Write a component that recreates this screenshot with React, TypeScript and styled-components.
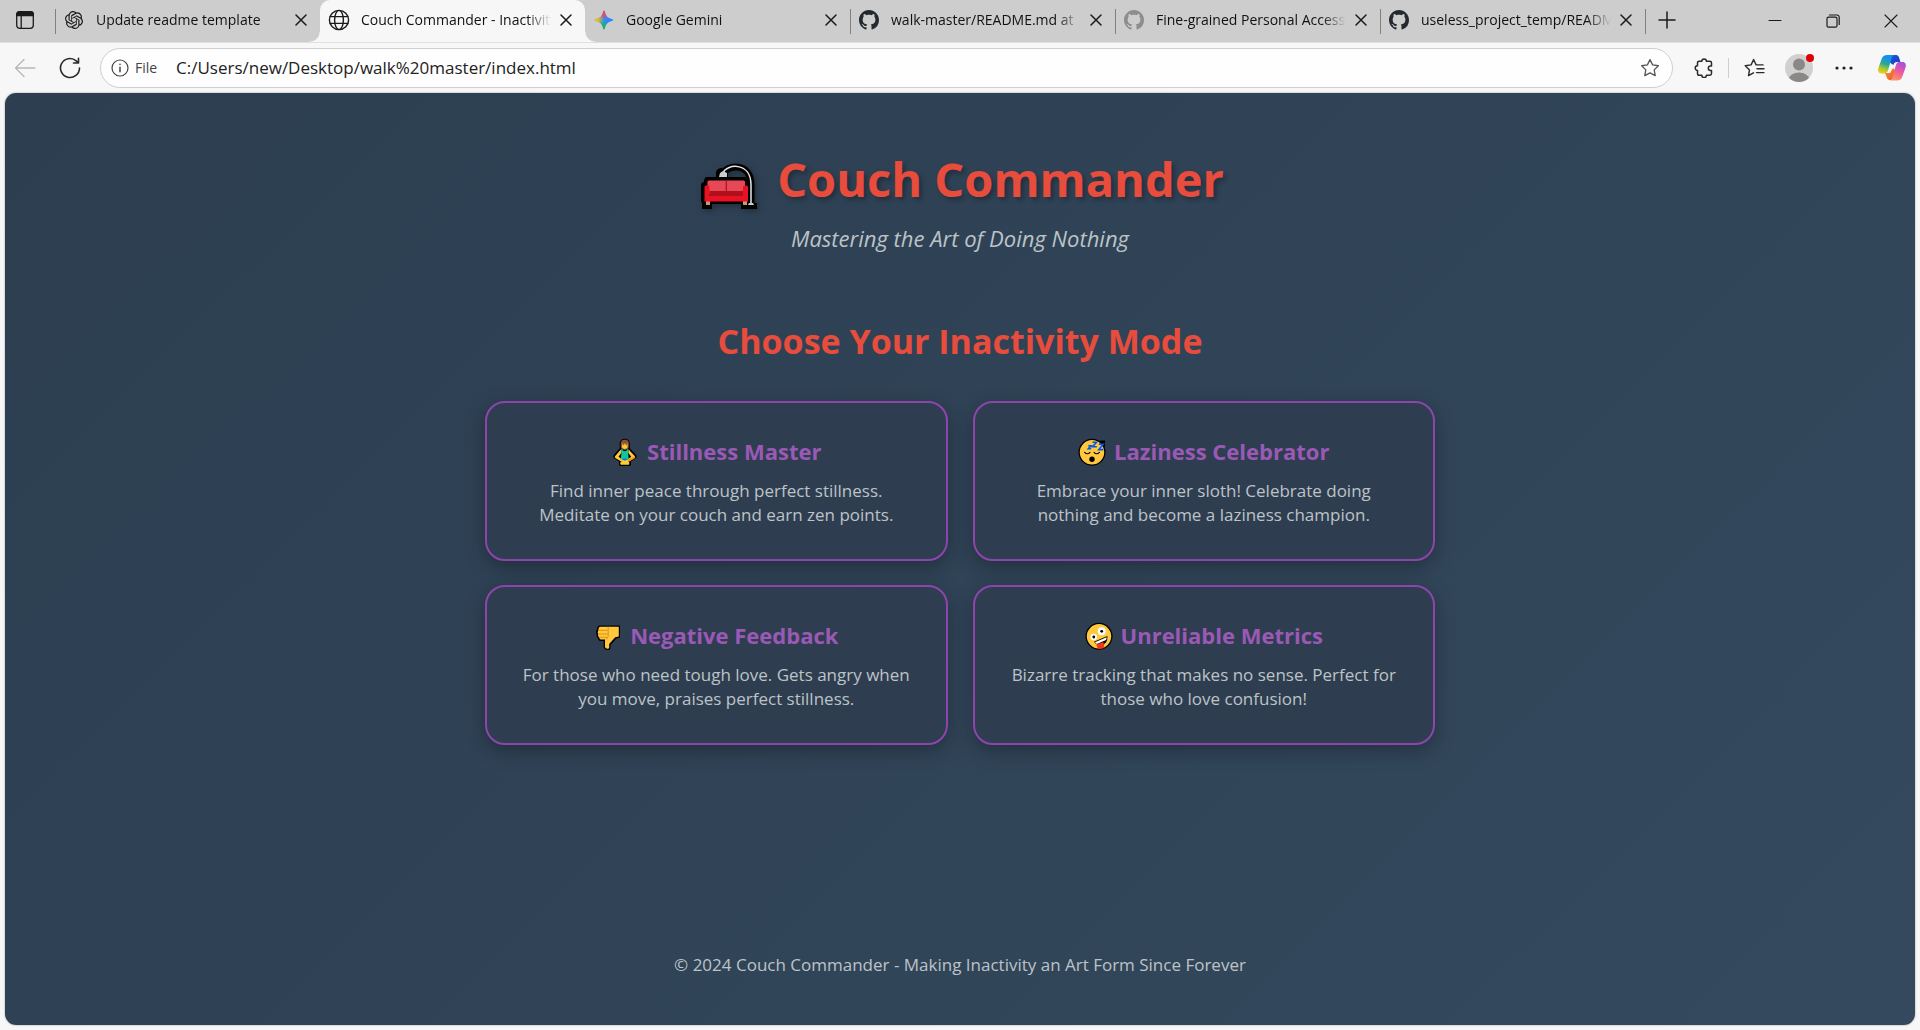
import React from "react";
import styled, { createGlobalStyle, css } from "styled-components";
import { SiOpenai } from "react-icons/si";

const GlobalStyle = createGlobalStyle`
  *, *::before, *::after { box-sizing: border-box; }
  body {
    margin: 0;
    background: #f7f7f7;
    font-family: "Open Sans", "Noto Sans", sans-serif;
  }
  h1, h2, h3, p { margin: 0; }
  button { font: inherit; color: inherit; }
`;

/* ---------- browser frame ---------- */

const Window = styled.div`
  min-height: 100vh;
  display: flex;
  flex-direction: column;
`;

const TabStrip = styled.div`
  display: flex;
  align-items: stretch;
  height: 42px;
  background: #cdcdcd;
  color: #1b1b1b;
`;

const IconButton = styled.button<{ $width?: number; $height?: number }>`
  flex: none;
  display: flex;
  align-items: center;
  justify-content: center;
  width: ${(p) => p.$width ?? 32}px;
  height: ${(p) => p.$height ?? 40}px;
  padding: 0;
  border: 0;
  background: none;
`;

const TabList = styled.div`
  display: flex;
  flex: 0 1 1590px;
  min-width: 0;
  margin-left: 5px;
`;

const divider = css`
  &::before {
    content: "";
    position: absolute;
    left: 0;
    top: 9px;
    width: 1px;
    height: 25px;
    background: #808080;
  }
`;

const Tab = styled.div<{ $active?: boolean; $divider?: boolean }>`
  position: relative;
  flex: 1 1 0;
  min-width: 0;
  display: flex;
  align-items: center;
  padding: 0 7px 2px 8px;

  ${(p) => p.$divider && divider}

  ${(p) =>
    p.$active &&
    css`
      background: #f7f7f7;
      border-radius: 10px 10px 0 0;
      &::before,
      &::after {
        content: "";
        position: absolute;
        bottom: 0;
        width: 10px;
        height: 10px;
      }
      &::before {
        left: -10px;
        background: radial-gradient(circle at 0 0, transparent 9px, #f7f7f7 10px);
      }
      &::after {
        right: -10px;
        background: radial-gradient(circle at 100% 0, transparent 9px, #f7f7f7 10px);
      }
    `}
`;

const NewTabButton = styled(IconButton)`
  position: relative;
  ${divider}
`;

const TabButton = styled.button`
  flex: 1;
  min-width: 0;
  display: flex;
  align-items: center;
  gap: 11px;
  height: 40px;
  padding: 0 3px 0 0;
  border: 0;
  background: none;
  text-align: left;
`;

const Favicon = styled.span`
  flex: none;
  display: flex;
  align-items: center;
  justify-content: center;
  width: 22px;
  height: 22px;
`;

const TabTitle = styled.span`
  flex: 1;
  min-width: 0;
  overflow: hidden;
  white-space: nowrap;
  font-size: 14px;
  line-height: 20px;
  color: #111;
  mask-image: linear-gradient(to right, #000 calc(100% - 24px), transparent);
`;

const WindowButtons = styled.div`
  display: flex;
  margin-left: auto;
`;

const Toolbar = styled.div`
  display: flex;
  align-items: center;
  padding: 5px 0 5px 6px;
  border-top: 1px solid #e0e0e0;
  color: #2b2b2b;
`;

const AddressBar = styled.form`
  flex: 1;
  min-width: 0;
  display: flex;
  align-items: center;
  height: 40px;
  margin: 0 14px 0 4px;
  padding: 0 7px 0 10px;
  background: #fefefe;
  border: 1px solid #cfcfcf;
  border-radius: 20px;
`;

const SiteInfo = styled.button`
  flex: none;
  display: flex;
  align-items: center;
  gap: 6px;
  width: 65px;
  padding: 0;
  border: 0;
  background: none;
  font-size: 14px;
  line-height: 20px;
  color: #444;
`;

const UrlInput = styled.input`
  flex: 1;
  min-width: 0;
  padding: 0;
  border: 0;
  outline: 0;
  background: none;
  font: 17px/24px "Open Sans", "Noto Sans", sans-serif;
  color: #222;
`;

const ToolbarDivider = styled.span`
  width: 1px;
  height: 20px;
  margin: 0 5px 0 7px;
  background: #cfcfcf;
`;

const Avatar = styled.span`
  position: relative;
  width: 28px;
  height: 28px;
`;

const Badge = styled.span`
  position: absolute;
  top: 0;
  right: -1px;
  width: 8px;
  height: 8px;
  border-radius: 50%;
  background: #e00000;
`;

/* ---------- page ---------- */

const Viewport = styled.div`
  flex: 1;
  display: flex;
  flex-direction: column;
  align-items: center;
  margin: 0 5px 5px;
  padding: 52px 24px 48px;
  border-radius: 11px;
  background: linear-gradient(135deg, #2c3e50, #34495e);
  box-shadow: 0 0 2px rgba(0, 0, 0, 0.4);
  color: #bdc3c7;
  text-align: center;
`;

const Header = styled.header`
  display: flex;
  flex-direction: column;
  gap: 10px;
  margin-bottom: 65px;
`;

const SiteTitle = styled.h1`
  display: flex;
  align-items: center;
  justify-content: center;
  gap: 17px;
  font-size: 47px;
  line-height: 68px;
  font-weight: 700;
  color: #e74c3c;
  text-shadow: 3px 3px 5px rgba(0, 0, 0, 0.3);
  svg { filter: drop-shadow(2px 2px 3px rgba(0, 0, 0, 0.3)); }
`;

const Tagline = styled.p`
  font-size: 22px;
  line-height: 30px;
  font-style: italic;
`;

const Main = styled.main`
  flex: 1;
  width: 100%;
  max-width: 950px;
`;

const SectionTitle = styled.h2`
  margin-bottom: 37px;
  font-size: 34px;
  line-height: 46px;
  font-weight: 700;
  color: #e74c3c;
`;

const ModeGrid = styled.div`
  display: grid;
  grid-template-columns: repeat(auto-fit, minmax(350px, 1fr));
  gap: 24px 25px;
`;

const ModeCard = styled.a`
  display: flex;
  flex-direction: column;
  gap: 12px;
  padding: 32px;
  border: 2px solid #8e44ad;
  border-radius: 20px;
  background: #2e3e50;
  box-shadow: 0 6px 20px rgba(0, 0, 0, 0.3);
  color: inherit;
  text-decoration: none;
`;

const ModeName = styled.h3`
  display: flex;
  align-items: center;
  justify-content: center;
  gap: 8px;
  font-size: 22px;
  line-height: 32px;
  font-weight: 700;
  color: #9b59b6;
`;

const ModeText = styled.p`
  font-size: 17px;
  line-height: 24px;
`;

const Footer = styled.footer`
  font-size: 17px;
  line-height: 24px;
`;

/* ---------- browser icons ---------- */

type Stroke = React.SVGProps<SVGSVGElement>;

const Line = ({ width = 20, height = 20, children, ...rest }: Stroke) => (
  <svg
    width={width}
    height={height}
    viewBox={`0 0 ${width} ${height}`}
    fill="none"
    stroke="currentColor"
    strokeWidth={1.3}
    strokeLinecap="round"
    strokeLinejoin="round"
    aria-hidden="true"
    {...rest}
  >
    {children}
  </svg>
);

const TabMenuIcon = () => (
  <Line>
    <rect x="1.7" y="1.7" width="16.6" height="16.6" rx="3" />
    <path d="M1.7 5.5V4.5a2.8 2.8 0 0 1 2.8-2.8h11a2.8 2.8 0 0 1 2.8 2.8v1z" fill="currentColor" />
    <path d="M6.2 6v12" />
  </Line>
);

const CloseIcon = () => (
  <Line width={12} height={12} strokeWidth={1.5}>
    <path d="M1 1l10 10M11 1L1 11" />
  </Line>
);

const GlobeIcon = () => (
  <Line width={22} height={22} strokeWidth={1.4}>
    <circle cx="11" cy="11" r="9.6" />
    <ellipse cx="11" cy="11" rx="4.4" ry="9.6" />
    <path d="M2.2 7.6h17.6M2.2 14.4h17.6" />
  </Line>
);

const GeminiIcon = () => (
  <svg width="20" height="20" viewBox="0 0 20 20" aria-hidden="true">
    <defs>
      <linearGradient id="gem-base" x1="0" y1="0" x2="1" y2="0">
        <stop offset="0.2" stopColor="#4a9be0" />
        <stop offset="0.6" stopColor="#3186ff" />
      </linearGradient>
      <radialGradient id="gem-red" cx="0.45" cy="0" r="0.5">
        <stop offset="0.3" stopColor="#f9434f" />
        <stop offset="1" stopColor="#f9434f" stopOpacity="0" />
      </radialGradient>
      <radialGradient id="gem-yellow" cx="0" cy="0.5" r="0.5">
        <stop offset="0.3" stopColor="#fbbc04" />
        <stop offset="1" stopColor="#fbbc04" stopOpacity="0" />
      </radialGradient>
      <radialGradient id="gem-green" cx="0.45" cy="1" r="0.5">
        <stop offset="0.3" stopColor="#10b95a" />
        <stop offset="1" stopColor="#10b95a" stopOpacity="0" />
      </radialGradient>
    </defs>
    {["gem-base", "gem-red", "gem-yellow", "gem-green"].map((id) => (
      <path
        key={id}
        fill={`url(#${id})`}
        d="M10 .8c.5 0 .7.5.9 1.3 1 4 3 6 7 7 .8.2 1.3.4 1.3.9s-.5.7-1.3.9c-4 1-6 3-7 7-.2.8-.4 1.3-.9 1.3s-.7-.5-.9-1.3c-1-4-3-6-7-7-.8-.2-1.3-.4-1.3-.9s.5-.7 1.3-.9c4-1 6-3 7-7 .2-.8.4-1.3.9-1.3z"
      />
    ))}
  </svg>
);

const GithubIcon = ({ color = "#24292f" }: { color?: string }) => (
  <svg width="20" height="20" viewBox="0 0 16 16" fill={color} aria-hidden="true">
    <path d="M8 0C3.58 0 0 3.58 0 8c0 3.54 2.29 6.53 5.47 7.59.4.07.55-.17.55-.38 0-.19-.01-.82-.01-1.49-2.01.37-2.53-.49-2.69-.94-.09-.23-.48-.94-.82-1.13-.28-.15-.68-.52-.01-.53.63-.01 1.08.58 1.23.82.72 1.21 1.87.87 2.33.66.07-.52.28-.87.51-1.07-1.78-.2-3.64-.89-3.64-3.95 0-.87.31-1.59.82-2.15-.08-.2-.36-1.02.08-2.12 0 0 .67-.21 2.2.82.64-.18 1.32-.27 2-.27s1.36.09 2 .27c1.53-1.04 2.2-.82 2.2-.82.44 1.1.16 1.92.08 2.12.51.56.82 1.27.82 2.15 0 3.07-1.87 3.75-3.65 3.95.29.25.54.73.54 1.48 0 1.07-.01 1.93-.01 2.2 0 .21.15.46.55.38A8.01 8.01 0 0 0 16 8c0-4.42-3.58-8-8-8z" />
  </svg>
);

const STAR = "M10 1.6l2.6 5.3 5.8.85-4.2 4.1 1 5.8L10 14.9l-5.2 2.75 1-5.8-4.2-4.1 5.8-.85z";

const CopilotIcon = () => (
  <svg width="30" height="28" viewBox="0 0 30 28" aria-hidden="true">
    <defs>
      <linearGradient id="cp-left" x1="0.6" y1="0" x2="0.3" y2="1">
        <stop offset="0.15" stopColor="#1690ee" />
        <stop offset="0.5" stopColor="#2fa98c" />
        <stop offset="0.75" stopColor="#a5c63a" />
        <stop offset="1" stopColor="#f7c90c" />
      </linearGradient>
      <linearGradient id="cp-right" x1="0.7" y1="0" x2="0.3" y2="1">
        <stop offset="0" stopColor="#a450e0" />
        <stop offset="0.5" stopColor="#ee5a9c" />
        <stop offset="1" stopColor="#ff9a5a" />
      </linearGradient>
      <linearGradient id="cp-fold" x1="0" y1="0" x2="1" y2="1">
        <stop offset="0" stopColor="#1b58d8" />
        <stop offset="1" stopColor="#1a3bc4" />
      </linearGradient>
      <linearGradient id="cp-tail" x1="0" y1="0" x2="1" y2="1">
        <stop offset="0" stopColor="#f6a21c" />
        <stop offset="1" stopColor="#ee4a3e" />
      </linearGradient>
    </defs>
    <path fill="url(#cp-fold)" d="M14 1h5c2 0 2.8 1.4 3.3 3.2L23.4 8H20c-2 0-3 1-3.6 3L12 8z" />
    <path fill="url(#cp-tail)" d="M8 19h5l3-5 3 3-3 9h-3c-2 0-2.800-1.200-3.300-2.800z" />
    <path fill="url(#cp-left)" d="M10 1h7.5c-2 .4-2.6 2-3.2 4l-3 10.500c-.6 2.200-1.600 3.900-4 3.900H4.500C1.500 19.400.6 17 1.400 14L4.800 4.500C5.700 2.200 7.400 1 10 1z" />
    <path fill="url(#cp-right)" d="M20 26.500h-7.500c2-.4 2.600-2 3.200-4l3-10.700c.6-2.200 1.600-3.900 4-3.900h2.800c3 0 3.900 2.500 3.100 5.400l-3.400 9.700c-.9 2.300-2.600 3.500-5.200 3.500z" />
  </svg>
);

/* ---------- page emoji ---------- */

const CouchIcon = () => (
  <svg width="64" height="64" viewBox="0 0 64 64" aria-hidden="true">
    <path d="M27 27C30 18 55 14 55 38V58" fill="none" stroke="#000" strokeWidth="7" />
    <path d="M20 25q1-4 6-4h6v10H20z" fill="#000" />
    <path d="M9 30h41q3 0 3 5 3 1 3 4v17h5v6H45v-5H16v5H6v-6l-1-2V39q0-4 3-4 0-5 3-5z" fill="#000" />
    <path d="M27 26C30 17 55 14 55 38v19" fill="none" stroke="#e8e8e8" strokeWidth="1.5" />
    <path d="M24 26l3-2 4 2v4h-8z" fill="#ccc" />
    <path d="M52 58l1-2h4l1 2z" fill="#ccc" />
    <rect x="10" y="54" width="4" height="4" fill="#c8986a" />
    <rect x="47" y="54" width="4" height="4" fill="#c8986a" />
    <rect x="11.5" y="33.5" width="37.5" height="14" rx="1.5" fill="#e74856" />
    <path d="M30.3 33.5v11" stroke="#b0101c" strokeWidth="1.2" />
    <path d="M8.5 40q0-1.500 1.500-1.500h2q1.500 0 1.500 1.500v9H47v-9q0-1.500 1.500-1.500h2q1.500 0 1.500 1.500v14.500H8.500z" fill="#e81224" />
    <rect x="13.5" y="44" width="33.5" height="5" fill="#b0101c" />
  </svg>
);

const Emoji = ({ children }: { children: React.ReactNode }) => (
  <svg width="28" height="30" viewBox="0 0 28 30" aria-hidden="true">
    {children}
  </svg>
);

const YogaIcon = () => (
  <Emoji>
    <path
      d="M13.7 2.7c-3 0-5 2-5 5v4.500L2.800 19c-.9 1.300-.4 2.700.8 3.500L8 25.500v3q0 1.500 2 1.500h8q2 0 2-1.500v-3l4.400-3c1.200-.8 1.700-2.200.8-3.500l-6.400-6.800V7.700c0-3-2-5-5.100-5z"
      fill="#000"
    />
    <path d="M9.8 13.5L4 20.300q-.6 1.200.6 1.900l6 3.500 6.500.3 6.300-3.800q1.200-.7.5-1.900l-6.300-6.800-.4 3.200 3 4-3.500 2.600h-5.600l-3.500-2.600 2.700-4z" fill="#ffc83d" />
    <path d="M17 23.500l6.500-3.300q1.200.8 0 2L17 26z" fill="#f09a12" />
    <path d="M9.200 26.500l4.500-2.700 4.600 2.700v1.300q0 1-1 1h-7q-1 0-1-1z" fill="#ffc83d" />
    <rect x="9.800" y="3.800" width="8" height="10" rx="3.600" fill="#8a5430" />
    <path d="M11 7.800h5.600v2.500c0 1.800-1.200 2.800-2.800 2.800S11 12.100 11 10.300z" fill="#ffc83d" />
    <path d="M11.600 8.700h1.600M14.600 8.700h1.600" stroke="#5c3018" strokeWidth="0.8" />
    <path d="M10 13.300h1.300q.5 2 2.500 2t2.500-2h1.300l-.4 5 .6 5H9.700l.6-5z" fill="#10c5a0" />
    <path d="M11 23.200q2.800-1.400 5.600 0l-2.800 1.500z" fill="#0078d7" />
  </Emoji>
);

const SleepingIcon = () => (
  <Emoji>
    <circle cx="14" cy="16.3" r="13.5" fill="#000" />
    <path d="M20.500 5.200l1.500-.8h5v5.100l-1 3z" fill="#000" />
    <circle cx="14" cy="16.3" r="12.2" fill="#ffc83d" />
    <path d="M6.600 16.300q2.700 3 5.400 0M16 16.300q2.700 3 5.400 0" fill="none" stroke="#000" strokeWidth="1.1" strokeLinecap="round" />
    <circle cx="14" cy="23.2" r="2.7" fill="#000" />
    <path
      d="M10.300 9.800h2.700l-2.700 3h2.900M14.500 6.300h4l-4 4.500h4.300M20.800 8.300h4.400l-4.400 5.300h4.600"
      fill="none"
      stroke="#0057f0"
      strokeWidth="1.6"
    />
  </Emoji>
);

const ThumbsDownIcon = () => (
  <Emoji>
    <path d="M6 5.400h20v12.200l-3.600.9L16.500 25v2.700q0 2.300-2.800 2.300t-4-2.500v-6.600H7q-2.800 0-3-2.500Q1.900 16.500 2.500 14q-1-2.300.3-4.500Q3.200 5.400 6 5.400z" fill="#000" />
    <path d="M6.200 6.700h18.600v9.700l-3.600.8L15.200 24v3.800q0 1-1.500 1t-2.700-1.600v-7.600H7.200q-1.800 0-1.900-2.200-1.700-1-1.200-3.200-.9-1.900.3-3.900.1-3.600 1.800-3.600z" fill="#ffc83d" />
    <path d="M4.400 10.300h9.200M4.200 14h9.400M5.400 17.300h8.200M14.200 6.700v10l-2 3" fill="none" stroke="#d98c12" strokeWidth="0.9" />
  </Emoji>
);

const ZanyIcon = () => (
  <Emoji>
    <circle cx="14" cy="16.3" r="13.5" fill="#000" />
    <circle cx="14" cy="16.3" r="12.2" fill="#ffc83d" />
    <circle cx="8.8" cy="17" r="3.3" fill="#fff" />
    <circle cx="8.8" cy="17" r="1.4" fill="#000" />
    <circle cx="16.7" cy="11.3" r="4" fill="#fff" />
    <circle cx="16.7" cy="11.3" r="1.4" fill="#000" />
    <path d="M9 21.800L22.400 16q.4 6-3.400 8.200-6.500 2.600-10-2.400z" fill="#000" />
    <path d="M10 22.300l11.600-5q0 1.600-.5 2.800L11.800 24q-1.100-.6-1.800-1.700z" fill="#fff" />
    <path d="M11.200 24.600l7.200-2.500 1 5.600q-2.600 1.600-6.600.9z" fill="#f03a17" />
  </Emoji>
);

/* ---------- content ---------- */

const tabs = [
  { title: "Update readme template", icon: <SiOpenai size={18} />, divider: true },
  { title: "Couch Commander - Inactivity", icon: <GlobeIcon />, active: true },
  { title: "Google Gemini", icon: <GeminiIcon /> },
  { title: "walk-master/README.md at", icon: <GithubIcon />, divider: true },
  { title: "Fine-grained Personal Access", icon: <GithubIcon color="#8b8d8f" />, divider: true },
  { title: "useless_project_temp/README", icon: <GithubIcon />, divider: true },
];

const modes = [
  {
    name: "Stillness Master",
    icon: <YogaIcon />,
    text: "Find inner peace through perfect stillness. Meditate on your couch and earn zen points.",
  },
  {
    name: "Laziness Celebrator",
    icon: <SleepingIcon />,
    text: "Embrace your inner sloth! Celebrate doing nothing and become a laziness champion.",
  },
  {
    name: "Negative Feedback",
    icon: <ThumbsDownIcon />,
    text: "For those who need tough love. Gets angry when you move, praises perfect stillness.",
  },
  {
    name: "Unreliable Metrics",
    icon: <ZanyIcon />,
    text: "Bizarre tracking that makes no sense. Perfect for those who love confusion!",
  },
];

const TabRow = () => (
  <TabStrip>
    <IconButton $width={50} aria-label="Tab actions menu">
      <TabMenuIcon />
    </IconButton>
    <TabList role="tablist">
      {tabs.map((t) => (
        <Tab key={t.title} $active={t.active} $divider={t.divider}>
          <TabButton role="tab" aria-selected={!!t.active}>
            <Favicon>{t.icon}</Favicon>
            <TabTitle>{t.title}</TabTitle>
          </TabButton>
          <IconButton $width={24} aria-label={`Close ${t.title}`}>
            <CloseIcon />
          </IconButton>
        </Tab>
      ))}
    </TabList>
    <NewTabButton $width={44} aria-label="New tab">
      <Line width={18} height={18} strokeWidth={1.5}>
        <path d="M9 1v16M1 9h16" />
      </Line>
    </NewTabButton>
    <WindowButtons>
      <IconButton $width={58} aria-label="Minimize">
        <Line width={14} height={14} strokeWidth={1}>
          <path d="M1 7.5h12" />
        </Line>
      </IconButton>
      <IconButton $width={58} $height={42} aria-label="Restore">
        <Line width={14} height={14} strokeWidth={1.2}>
          <rect x="1" y="3.2" width="10" height="10" rx="1.5" />
          <path d="M3.5 1H11a2.200 2.200 0 0 1 2.200 2.200v7.300" />
        </Line>
      </IconButton>
      <IconButton $width={58} $height={42} aria-label="Close window">
        <Line width={14} height={14} strokeWidth={1.1}>
          <path d="M1 1l12 12M13 1L1 13" />
        </Line>
      </IconButton>
    </WindowButtons>
  </TabStrip>
);

const AddressRow = () => (
  <Toolbar>
    <IconButton $width={38} aria-label="Back">
      <Line width={22} height={20} stroke="#b8b8b8">
        <path d="M21 10H1.500M10 1.500L1.500 10l8.500 8.500" />
      </Line>
    </IconButton>
    <IconButton $width={52} aria-label="Refresh">
      <Line width={22} height={22} strokeWidth={1.6}>
        <path d="M20.500 11a9.500 9.500 0 1 1-3.300-7.200L19.500 6M19.500 1.300V6h-5" />
      </Line>
    </IconButton>
    <AddressBar role="search" onSubmit={(e) => e.preventDefault()}>
      <SiteInfo type="button">
        <Line width={18} height={18} strokeWidth={1.2}>
          <circle cx="9" cy="9" r="8" />
          <path d="M9 8.200v4.600M9 5.300v.2" strokeWidth="1.5" />
        </Line>
        File
      </SiteInfo>
      <UrlInput aria-label="Address" defaultValue="C:/Users/new/Desktop/walk%20master/index.html" />
      <IconButton $width={30} $height={30} type="button" aria-label="Add to favorites">
        <Line stroke="#555">
          <path d={STAR} />
        </Line>
      </IconButton>
    </AddressBar>
    <IconButton aria-label="Extensions" $width={34}>
      <Line width={20} height={20} strokeWidth={1.5}>
        <path d="M7.800 3.200a2.300 2.300 0 0 1 4.600 0h3.400q1.700 0 1.700 1.700V8h-1a2.200 2.200 0 0 0 0 4.400h1v3.200q0 1.700-1.700 1.700h-3.400a2.300 2.300 0 0 1-4.600 0H5.200q-1.700 0-1.700-1.700v-3.200a2.300 2.300 0 0 1 0-4.600V4.900q0-1.700 1.700-1.700z" />
      </Line>
    </IconButton>
    <ToolbarDivider />
    <IconButton aria-label="Favorites" $width={40}>
      <Line width={22} height={20} strokeWidth={1.4}>
        <path d="M10.500 14.800l-5 2.800 1-5.700-4.300-4.100 5.900-.9L10.600 1.500l2.500 5.400h7M14 10.800h7M13.500 14.600H21" />
      </Line>
    </IconButton>
    <IconButton aria-label="Profile" $width={50}>
      <Avatar>
        <svg width="28" height="28" viewBox="0 0 28 28" aria-hidden="true">
          <clipPath id="avatar-clip">
            <circle cx="14" cy="14" r="14" />
          </clipPath>
          <g clipPath="url(#avatar-clip)">
            <rect width="28" height="28" fill="#d2d0ce" />
            <circle cx="14" cy="10.5" r="6" fill="#8a8886" />
            <ellipse cx="14" cy="25" rx="10" ry="6.5" fill="#8a8886" />
          </g>
        </svg>
        <Badge />
      </Avatar>
    </IconButton>
    <IconButton aria-label="Settings and more" $width={40}>
      <svg width="18" height="4" viewBox="0 0 18 4" fill="#222" aria-hidden="true">
        <circle cx="2" cy="2" r="1.6" />
        <circle cx="9" cy="2" r="1.6" />
        <circle cx="16" cy="2" r="1.6" />
      </svg>
    </IconButton>
    <IconButton aria-label="Copilot" $width={56}>
      <CopilotIcon />
    </IconButton>
  </Toolbar>
);

export default function App() {
  return (
    <Window>
      <GlobalStyle />
      <TabRow />
      <AddressRow />
      <Viewport>
        <Header>
          <SiteTitle>
            <CouchIcon />
            Couch Commander
          </SiteTitle>
          <Tagline>Mastering the Art of Doing Nothing</Tagline>
        </Header>
        <Main>
          <SectionTitle>Choose Your Inactivity Mode</SectionTitle>
          <ModeGrid>
            {modes.map((m) => (
              <ModeCard key={m.name} href="#">
                <ModeName>
                  {m.icon}
                  {m.name}
                </ModeName>
                <ModeText>{m.text}</ModeText>
              </ModeCard>
            ))}
          </ModeGrid>
        </Main>
        <Footer>© 2024 Couch Commander - Making Inactivity an Art Form Since Forever</Footer>
      </Viewport>
    </Window>
  );
}
